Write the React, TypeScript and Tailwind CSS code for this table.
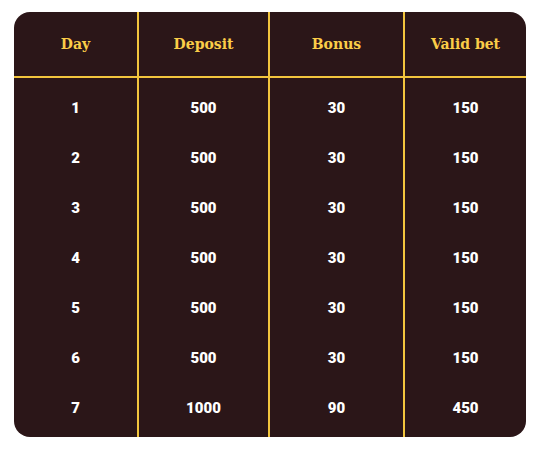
const columns = [
  { title: 'Day', width: 'w-[125px]', values: ['1', '2', '3', '4', '5', '6', '7'] },
  { title: 'Deposit', width: 'w-[131px]', values: ['500', '500', '500', '500', '500', '500', '1000'] },
  { title: 'Bonus', width: 'w-[135px]', values: ['30', '30', '30', '30', '30', '30', '90'] },
  { title: 'Valid bet', width: 'w-[121px]', values: ['150', '150', '150', '150', '150', '150', '450'] },
];

export default function App() {
  return (
    <div className="min-h-screen bg-white pt-3 pl-[14px]">
      <div className="flex w-[512px] overflow-hidden rounded-[16px] bg-[#2b1618]">
        {columns.map((col, i) => (
          <div
            key={col.title}
            className={`${col.width} flex flex-col ${i < columns.length - 1 ? 'border-r-2 border-[#f2c53d]' : ''}`}
          >
            <div
              className="flex h-[66px] items-center justify-center border-b-2 border-[#f2c53d] text-[14px] font-bold text-[#fbcd48]"
              style={{ fontFamily: '"DejaVu Serif", "Liberation Serif", serif' }}
            >
              {col.title}
            </div>
            <div className="flex flex-col pt-[5px] pb-[4px]">
              {col.values.map((v, j) => (
                <div
                  key={j}
                  className="flex h-[50px] items-center justify-center text-[15px] font-black text-white"
                  style={{ fontFamily: 'Roboto, "Noto Sans", sans-serif' }}
                >
                  {v}
                </div>
              ))}
            </div>
          </div>
        ))}
      </div>
    </div>
  );
}
